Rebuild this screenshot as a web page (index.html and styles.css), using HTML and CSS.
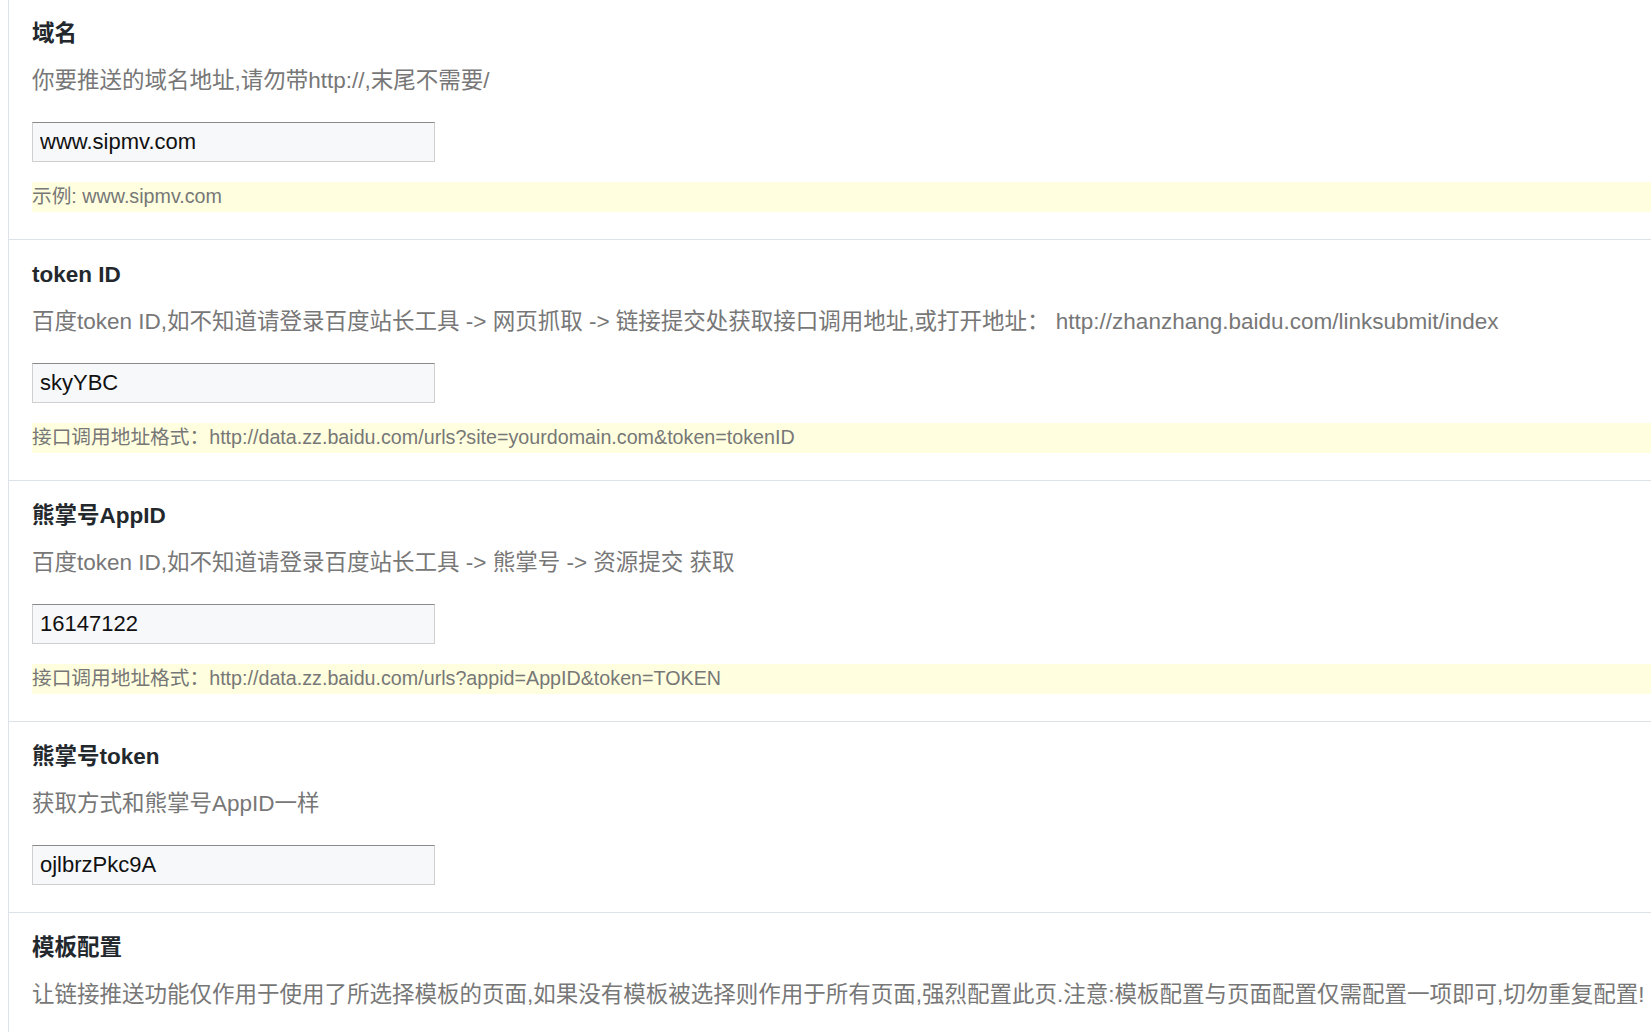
FILE: index.html
```html
<!DOCTYPE html>
<html lang="zh-CN">
<head>
<meta charset="utf-8">
<title>链接推送设置</title>
<link rel="stylesheet" href="styles.css">
</head>
<body>
<div class="panel">
  <section class="field first">
    <h3 class="field-title">域名</h3>
    <p class="field-desc">你要推送的域名地址,请勿带http://,末尾不需要/</p>
    <input class="field-input" type="text" value="www.sipmv.com">
    <div class="field-hint">示例: www.sipmv.com</div>
  </section>
  <section class="field">
    <h3 class="field-title">token ID</h3>
    <p class="field-desc">百度token ID,如不知道请登录百度站长工具 -&gt; 网页抓取 -&gt; 链接提交处获取接口调用地址,或打开地址：&nbsp;http://zhanzhang.baidu.com/linksubmit/index</p>
    <input class="field-input" type="text" value="skyYBC">
    <div class="field-hint">接口调用地址格式：http://data.zz.baidu.com/urls?site=yourdomain.com&amp;token=tokenID</div>
  </section>
  <section class="field">
    <h3 class="field-title">熊掌号AppID</h3>
    <p class="field-desc">百度token ID,如不知道请登录百度站长工具 -&gt; 熊掌号 -&gt; 资源提交 获取</p>
    <input class="field-input" type="text" value="16147122">
    <div class="field-hint">接口调用地址格式：http://data.zz.baidu.com/urls?appid=AppID&amp;token=TOKEN</div>
  </section>
  <section class="field">
    <h3 class="field-title">熊掌号token</h3>
    <p class="field-desc">获取方式和熊掌号AppID一样</p>
    <input class="field-input" type="text" value="ojlbrzPkc9A">
  </section>
  <section class="field">
    <h3 class="field-title">模板配置</h3>
    <p class="field-desc">让链接推送功能仅作用于使用了所选择模板的页面,如果没有模板被选择则作用于所有页面,强烈配置此页.注意:模板配置与页面配置仅需配置一项即可,切勿重复配置!</p>
  </section>
</div>
</body>
</html>
```

FILE: styles.css
```css
html, body {
  margin: 0;
  padding: 0;
  background: #ffffff;
  overflow: hidden;
}

body {
  font-family: "Liberation Sans", "Noto Sans CJK SC", sans-serif;
  color: #444;
}

.panel {
  margin-left: 8px;
  margin-top: -2px;
  border-left: 1px solid #dde3e8;
}

.field {
  border-top: 1px solid #dce3e8;
  padding: 20px 0 27px 23px;
  display: flex;
  flex-direction: column;
  align-items: flex-start;
}

.field-title {
  margin: 0;
  font-size: 22.5px;
  line-height: 30px;
  font-weight: bold;
  color: #23282d;
}

.field-desc {
  margin: 17px 0 0 0;
  font-size: 22.5px;
  line-height: 30px;
  color: #777777;
  white-space: nowrap;
}

.field-input {
  box-sizing: border-box;
  margin: 26px 0 0 0;
  width: 403px;
  height: 40px;
  padding: 0 7px;
  font-family: "Liberation Sans", sans-serif;
  font-size: 22px;
  color: #111;
  background: #f7f8fa;
  border: 1px solid #cfcfcf;
  border-top-color: #8a8a8a;
  border-radius: 0;
  outline: none;
}

.field-hint {
  align-self: stretch;
  margin-top: 20px;
  height: 30px;
  font-size: 19.7px;
  line-height: 29px;
  color: #777777;
  background: #ffffdf;
  white-space: nowrap;
}
```
